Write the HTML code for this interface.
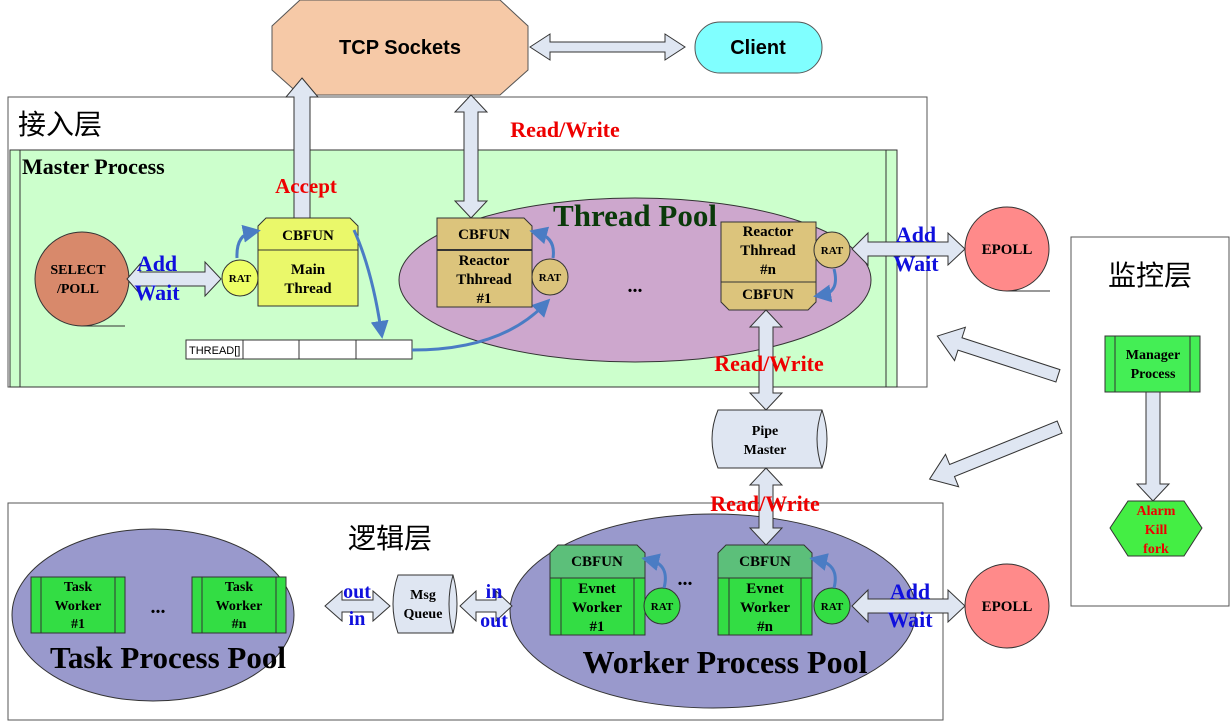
<!DOCTYPE html>
<html><head><meta charset="utf-8"><style>
html,body{margin:0;padding:0;background:#fff;}
svg{display:block;font-family:"Liberation Serif","Noto Serif CJK SC",serif;font-weight:bold;}
.ar{fill:#dfe6f2;stroke:#333;stroke-width:1;}
.cv{fill:none;stroke:#4a7cc4;stroke-width:3;}
</style></head><body>
<svg width="1231" height="721" viewBox="0 0 1231 721" xmlns="http://www.w3.org/2000/svg">
<defs>
<marker id="ah" markerWidth="6" markerHeight="6" refX="3" refY="3" orient="auto"><path d="M0,0 L6,3 L0,6 z" fill="#4a7cc4"/></marker>
</defs>
<!-- TCP sockets -->
<polygon points="300,0 500,0 528,26 528,70 500,95 300,95 272,70 272,26" fill="#f6c9a7" stroke="#555"/>
<text x="400" y="54" font-size="20" text-anchor="middle" font-family="Liberation Sans" font-weight="bold">TCP Sockets</text>
<rect x="695" y="22" width="127" height="51" rx="25" fill="#80ffff" stroke="#555"/>
<text x="758" y="54" font-size="20" text-anchor="middle" font-family="Liberation Sans" font-weight="bold">Client</text>
<polygon class="ar" points="530,47 550,34 550,42 665,42 665,34 685,47 665,60 665,52 550,52 550,60"/>

<!-- 接入层 -->
<rect x="8" y="97" width="919" height="290" fill="#fff" stroke="#555"/>
<text x="18" y="134" font-size="28" font-weight="normal" font-family="Noto Sans CJK SC,sans-serif">接入层</text>
<rect x="10" y="150" width="887" height="237" fill="#ccffcc" stroke="#333"/>
<line x1="20" y1="150" x2="20" y2="387" stroke="#333"/>
<line x1="886" y1="150" x2="886" y2="387" stroke="#333"/>
<text x="22" y="174" font-size="22">Master Process</text>

<ellipse cx="635" cy="280" rx="236" ry="82" fill="#cda7cd" stroke="#333"/>
<text x="635" y="226" font-size="31" text-anchor="middle" fill="#0a3a0a">Thread Pool</text>
<text x="635" y="292" font-size="20" text-anchor="middle">...</text>

<!-- TCP arrows -->
<polygon class="ar" points="302,78 318,97 310,97 310,218 294,218 294,97 286,97"/>
<polygon class="ar" points="471,95 487,112 478,112 478,201 487,201 471,218 455,201 464,201 464,112 455,112"/>
<text x="565" y="137" font-size="22" fill="#e00" text-anchor="middle">Read/Write</text>
<text x="306" y="193" font-size="21" fill="#e00" text-anchor="middle">Accept</text>

<!-- SELECT/POLL -->
<circle cx="82" cy="279" r="47" fill="#d8896b" stroke="#333"/>
<line x1="82" y1="326" x2="125" y2="326" stroke="#333"/>
<text x="78" y="274" font-size="14" text-anchor="middle">SELECT</text>
<text x="78" y="293" font-size="14" text-anchor="middle">/POLL</text>
<polygon class="ar" points="127,279 140,264 140,272 205,272 205,262 221,279 205,296 205,286 140,286 140,294"/>
<text x="157" y="271" font-size="22" fill="#1010dd" text-anchor="middle">Add</text>
<text x="157" y="300" font-size="22" fill="#1010dd" text-anchor="middle">Wait</text>

<!-- Main thread -->
<circle cx="240" cy="278" r="18" fill="#eeff66" stroke="#333"/>
<text x="240" y="282" font-size="11" text-anchor="middle">RAT</text>
<polygon points="266,218 350,218 358,226 358,306 258,306 258,226" fill="#eaf86a" stroke="#333"/>
<line x1="258" y1="250" x2="358" y2="250" stroke="#333"/>
<text x="308" y="240" font-size="15" text-anchor="middle">CBFUN</text>
<text x="308" y="274" font-size="15" text-anchor="middle">Main</text>
<text x="308" y="293" font-size="15" text-anchor="middle">Thread</text>
<path class="cv" d="M237,258 Q236,235 252,232" marker-end="url(#ah)"/>
<path class="cv" d="M354,230 Q372,270 381,330" marker-end="url(#ah)"/>

<!-- THREAD table -->
<rect x="186" y="340" width="226" height="19" fill="#fff" stroke="#333"/>
<line x1="243" y1="340" x2="243" y2="359" stroke="#333"/>
<line x1="299" y1="340" x2="299" y2="359" stroke="#333"/>
<line x1="356" y1="340" x2="356" y2="359" stroke="#333"/>
<text x="189" y="354" font-size="11" font-family="Liberation Sans" font-weight="normal">THREAD[]</text>
<path class="cv" d="M412,350 Q500,350 544,305" marker-end="url(#ah)"/>

<!-- Reactor #1 -->
<polygon points="437,218 524,218 532,226 532,307 437,307" fill="#dcc47c" stroke="#333"/>
<line x1="437" y1="250" x2="532" y2="250" stroke="#333" stroke-width="2"/>
<text x="484" y="239" font-size="15" text-anchor="middle">CBFUN</text>
<text x="484" y="265" font-size="15" text-anchor="middle">Reactor</text>
<text x="484" y="284" font-size="15" text-anchor="middle">Thhread</text>
<text x="484" y="303" font-size="15" text-anchor="middle">#1</text>
<circle cx="550" cy="277" r="18" fill="#dcc47c" stroke="#333"/>
<text x="550" y="281" font-size="11" text-anchor="middle">RAT</text>
<path class="cv" d="M553,258 Q556,238 538,233" marker-end="url(#ah)"/>

<!-- Reactor #n -->
<polygon points="721,222 816,222 816,302 808,310 729,310 721,302" fill="#dcc47c" stroke="#333"/>
<line x1="721" y1="282" x2="816" y2="282" stroke="#333"/>
<text x="768" y="236" font-size="15" text-anchor="middle">Reactor</text>
<text x="768" y="255" font-size="15" text-anchor="middle">Thhread</text>
<text x="768" y="274" font-size="15" text-anchor="middle">#n</text>
<text x="768" y="299" font-size="15" text-anchor="middle">CBFUN</text>
<circle cx="832" cy="250" r="18" fill="#dcc47c" stroke="#333"/>
<text x="832" y="254" font-size="11" text-anchor="middle">RAT</text>
<path class="cv" d="M834,269 Q840,292 822,295" marker-end="url(#ah)"/>

<!-- EPOLL top -->
<polygon class="ar" points="852,249 868,233 868,242 948,242 948,233 965,249 948,265 948,256 868,256 868,265"/>
<text x="916" y="242" font-size="22" fill="#1010dd" text-anchor="middle">Add</text>
<text x="916" y="271" font-size="22" fill="#1010dd" text-anchor="middle">Wait</text>
<circle cx="1007" cy="249" r="42" fill="#ff8a8a" stroke="#333"/>
<line x1="1007" y1="291" x2="1050" y2="291" stroke="#333"/>
<text x="1007" y="254" font-size="15" text-anchor="middle">EPOLL</text>

<!-- pipe -->
<polygon class="ar" points="766,310 782,327 773,327 773,393 782,393 766,410 750,393 759,393 759,327 750,327"/>
<text x="769" y="371" font-size="22" fill="#e00" text-anchor="middle">Read/Write</text>
<path d="M718,410 L822,410 Q832,439 822,468 L718,468 Q706,439 718,410 Z" fill="#dfe6f2" stroke="#333"/>
<path d="M822,410 Q812,439 822,468" fill="none" stroke="#333"/>
<text x="765" y="435" font-size="14" text-anchor="middle">Pipe</text>
<text x="765" y="454" font-size="14" text-anchor="middle">Master</text>

<!-- 监控层 -->
<rect x="1071" y="237" width="158" height="369" fill="#fff" stroke="#555"/>
<text x="1150" y="285" font-size="28" font-weight="normal" text-anchor="middle" font-family="Noto Sans CJK SC,sans-serif">监控层</text>
<rect x="1105" y="336" width="95" height="56" fill="#44ee55" stroke="#333"/>
<line x1="1115" y1="336" x2="1115" y2="392" stroke="#333"/>
<line x1="1190" y1="336" x2="1190" y2="392" stroke="#333"/>
<text x="1153" y="359" font-size="14" text-anchor="middle">Manager</text>
<text x="1153" y="378" font-size="14" text-anchor="middle">Process</text>
<polygon class="ar" points="1146,392 1160,392 1160,484 1169,484 1153,501 1137,484 1146,484"/>
<polygon points="1128,501 1184,501 1202,528 1184,556 1128,556 1110,528" fill="#44ee44" stroke="#333"/>
<text x="1156" y="515" font-size="14" fill="#e00" text-anchor="middle">Alarm</text>
<text x="1156" y="534" font-size="14" fill="#e00" text-anchor="middle">Kill</text>
<text x="1156" y="553" font-size="14" fill="#e00" text-anchor="middle">fork</text>
<g transform="translate(937,337) rotate(18)"><polygon class="ar" points="0,0 24,-17 24,-6 127,-6 127,7 24,7 24,18" transform="translate(0,-1)"/></g>
<g transform="translate(930,480) rotate(-22)"><polygon class="ar" points="0,0 24,-17 24,-6 140,-6 140,7 24,7 24,18" transform="translate(0,-1)"/></g>

<!-- 逻辑层 -->
<rect x="8" y="503" width="935" height="217" fill="#fff" stroke="#555"/>
<text x="390" y="548" font-size="28" font-weight="normal" text-anchor="middle" font-family="Noto Sans CJK SC,sans-serif">逻辑层</text>
<ellipse cx="153" cy="615" rx="141" ry="86" fill="#9999cc" stroke="#333"/>
<ellipse cx="713" cy="611" rx="203" ry="97" fill="#9999cc" stroke="#333"/>
<polygon class="ar" points="766,468 782,485 773,485 773,528 782,528 766,545 750,528 759,528 759,485 750,485"/>
<text x="765" y="511" font-size="22" fill="#e00" text-anchor="middle">Read/Write</text>

<!-- Task workers -->
<rect x="31" y="577" width="94" height="56" fill="#33dd44" stroke="#333"/>
<line x1="41" y1="577" x2="41" y2="633" stroke="#333"/><line x1="115" y1="577" x2="115" y2="633" stroke="#333"/>
<text x="78" y="591" font-size="14" text-anchor="middle">Task</text>
<text x="78" y="610" font-size="14" text-anchor="middle">Worker</text>
<text x="78" y="628" font-size="14" text-anchor="middle">#1</text>
<rect x="192" y="577" width="94" height="56" fill="#33dd44" stroke="#333"/>
<line x1="202" y1="577" x2="202" y2="633" stroke="#333"/><line x1="276" y1="577" x2="276" y2="633" stroke="#333"/>
<text x="239" y="591" font-size="14" text-anchor="middle">Task</text>
<text x="239" y="610" font-size="14" text-anchor="middle">Worker</text>
<text x="239" y="628" font-size="14" text-anchor="middle">#n</text>
<text x="158" y="613" font-size="20" text-anchor="middle">...</text>
<text x="168" y="668" font-size="31" text-anchor="middle">Task Process Pool</text>

<polygon class="ar" points="325,606 342,591 342,600 373,600 373,591 390,606 373,621 373,612 342,612 342,621"/>
<text x="357" y="598" font-size="20" fill="#1010dd" text-anchor="middle">out</text>
<text x="357" y="625" font-size="20" fill="#1010dd" text-anchor="middle">in</text>
<path d="M398,575 L453,575 Q461,604 453,633 L398,633 Q388,604 398,575 Z" fill="#dfe6f2" stroke="#333"/>
<path d="M453,575 Q445,604 453,633" fill="none" stroke="#333"/>
<text x="423" y="599" font-size="14" text-anchor="middle">Msg</text>
<text x="423" y="618" font-size="14" text-anchor="middle">Queue</text>
<polygon class="ar" points="460,606 476,591 476,600 496,600 496,591 512,606 496,621 496,612 476,612 476,621"/>
<text x="494" y="598" font-size="20" fill="#1010dd" text-anchor="middle">in</text>
<text x="494" y="627" font-size="20" fill="#1010dd" text-anchor="middle">out</text>

<!-- Event workers -->
<polygon points="558,545 637,545 645,553 645,578 550,578 550,553" fill="#5cbf7a" stroke="#333"/>
<rect x="550" y="578" width="95" height="57" fill="#33dd44" stroke="#333"/>
<line x1="561" y1="578" x2="561" y2="635" stroke="#333"/><line x1="634" y1="578" x2="634" y2="635" stroke="#333"/>
<text x="597" y="566" font-size="15" text-anchor="middle">CBFUN</text>
<text x="597" y="593" font-size="15" text-anchor="middle">Evnet</text>
<text x="597" y="612" font-size="15" text-anchor="middle">Worker</text>
<text x="597" y="631" font-size="15" text-anchor="middle">#1</text>
<circle cx="662" cy="606" r="18" fill="#33dd44" stroke="#333"/>
<text x="662" y="610" font-size="11" text-anchor="middle">RAT</text>
<path class="cv" d="M664,588 Q670,565 650,560" marker-end="url(#ah)"/>
<text x="685" y="585" font-size="20" text-anchor="middle">...</text>

<polygon points="726,545 804,545 812,553 812,578 718,578 718,553" fill="#5cbf7a" stroke="#333"/>
<rect x="718" y="578" width="94" height="57" fill="#33dd44" stroke="#333"/>
<line x1="729" y1="578" x2="729" y2="635" stroke="#333"/><line x1="801" y1="578" x2="801" y2="635" stroke="#333"/>
<text x="765" y="566" font-size="15" text-anchor="middle">CBFUN</text>
<text x="765" y="593" font-size="15" text-anchor="middle">Evnet</text>
<text x="765" y="612" font-size="15" text-anchor="middle">Worker</text>
<text x="765" y="631" font-size="15" text-anchor="middle">#n</text>
<circle cx="832" cy="606" r="18" fill="#33dd44" stroke="#333"/>
<text x="832" y="610" font-size="11" text-anchor="middle">RAT</text>
<path class="cv" d="M834,588 Q840,565 818,560" marker-end="url(#ah)"/>
<text x="725" y="673" font-size="32" text-anchor="middle">Worker Process Pool</text>

<polygon class="ar" points="852,606 868,590 868,599 948,599 948,590 965,606 948,622 948,613 868,613 868,622"/>
<text x="910" y="599" font-size="22" fill="#1010dd" text-anchor="middle">Add</text>
<text x="910" y="627" font-size="22" fill="#1010dd" text-anchor="middle">Wait</text>
<circle cx="1007" cy="606" r="42" fill="#ff8a8a" stroke="#333"/>
<text x="1007" y="611" font-size="15" text-anchor="middle">EPOLL</text>
</svg>
</body></html>
